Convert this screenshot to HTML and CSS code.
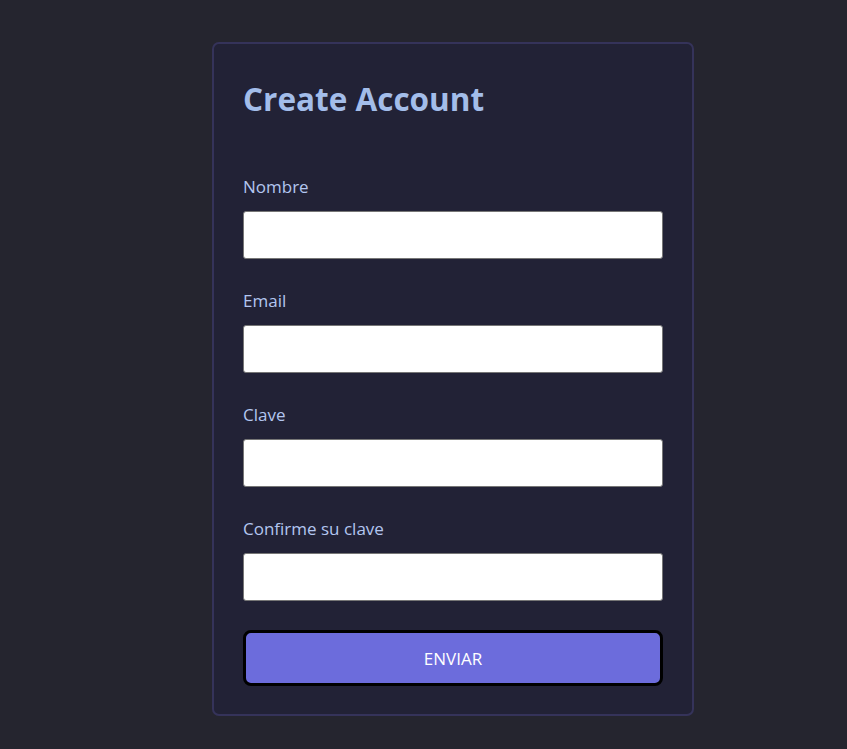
FILE: index.html
```html
<!DOCTYPE html>
<html lang="es">
<head>
<meta charset="utf-8">
<title>Create Account</title>
<link rel="stylesheet" href="styles.css">
</head>
<body>
<form class="card">
  <h1 class="title">Create Account</h1>
  <div class="field">
    <label class="label" for="nombre">Nombre</label>
    <input class="input" id="nombre" type="text">
  </div>
  <div class="field">
    <label class="label" for="email">Email</label>
    <input class="input" id="email" type="email">
  </div>
  <div class="field">
    <label class="label" for="clave">Clave</label>
    <input class="input" id="clave" type="password">
  </div>
  <div class="field">
    <label class="label" for="clave2">Confirme su clave</label>
    <input class="input" id="clave2" type="password">
  </div>
  <button class="submit" type="button">ENVIAR</button>
</form>
</body>
</html>
```

FILE: styles.css
```css
html, body {
  margin: 0;
  padding: 0;
}
body {
  background: #25252f;
  font-family: "Open Sans", "Noto Sans", sans-serif;
  min-height: 749px;
  padding-top: 42px;
  box-sizing: border-box;
}
.card {
  width: 482px;
  box-sizing: border-box;
  margin-left: 212px;
  background: #222236;
  border: 2px solid #35335a;
  border-radius: 7px;
  padding: 30px 29px 28px;
  display: flex;
  flex-direction: column;
}
.title {
  margin: 0 0 49px;
  font-size: 31.5px;
  font-weight: 700;
  line-height: 50px;
  color: #a3bdea;
}
.field {
  display: flex;
  flex-direction: column;
  margin-bottom: 28px;
}
.label {
  font-size: 17px;
  line-height: 24px;
  color: #b3c6f0;
  padding-top: 2px;
  margin-bottom: 12px;
}
.input {
  height: 48px;
  box-sizing: border-box;
  border: 1px solid #767676;
  border-radius: 3px;
  background: #fff;
  margin: 0;
}
.submit {
  margin-top: 1px;
  height: 56px;
  box-sizing: border-box;
  border: 3px solid #000;
  border-radius: 8px;
  background: #6c6cdc;
  color: #fff;
  font-family: inherit;
  font-size: 17px;
}
```
